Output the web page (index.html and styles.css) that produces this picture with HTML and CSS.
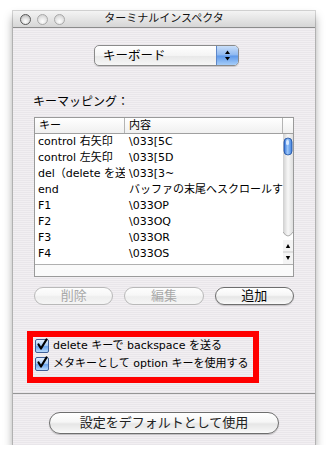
FILE: index.html
```html
<!DOCTYPE html>
<html lang="ja">
<head>
<meta charset="utf-8">
<title>ターミナルインスペクタ</title>
<link rel="stylesheet" href="styles.css">
</head>
<body>
<div class="window">
  <div class="titlebar">
    <div class="lights">
      <span class="light dark"></span>
      <span class="light"></span>
      <span class="light"></span>
    </div>
    <div class="title">ターミナルインスペクタ</div>
  </div>
  <div class="content">
    <div class="popup-row">
      <div class="popup">
        <span class="popup-label">キーボード</span>
        <span class="popup-arrows">
          <svg width="21" height="21" viewBox="0 0 21 21"><path d="M10.5 5.5 L13 9 L8 9 Z" fill="#000"/><path d="M8 12 L13 12 L10.5 15.5 Z" fill="#000"/></svg>
        </span>
      </div>
    </div>
    <div class="section-label">キーマッピング：</div>
    <div class="table">
      <div class="thead">
        <div class="th c1">キー</div>
        <div class="th c2">内容</div>
        <div class="th c3"></div>
      </div>
      <div class="tbody">
        <div class="rows">
          <div class="row"><div class="td c1">control 右矢印</div><div class="td c2">\033[5C</div></div>
          <div class="row"><div class="td c1">control 左矢印</div><div class="td c2">\033[5D</div></div>
          <div class="row"><div class="td c1">del（delete を送る）</div><div class="td c2">\033[3~</div></div>
          <div class="row"><div class="td c1">end</div><div class="td c2">バッファの末尾へスクロールする</div></div>
          <div class="row"><div class="td c1">F1</div><div class="td c2">\033OP</div></div>
          <div class="row"><div class="td c1">F2</div><div class="td c2">\033OQ</div></div>
          <div class="row"><div class="td c1">F3</div><div class="td c2">\033OR</div></div>
          <div class="row"><div class="td c1">F4</div><div class="td c2">\033OS</div></div>
        </div>
        <div class="vscroll">
          <svg width="10" height="130" viewBox="0 0 10 130">
            <defs>
              <linearGradient id="trk" x1="0" y1="0" x2="1" y2="0">
                <stop offset="0" stop-color="#cfcfcf"/>
                <stop offset="0.5" stop-color="#f7f7f7"/>
                <stop offset="1" stop-color="#dedede"/>
              </linearGradient>
              <linearGradient id="thm" x1="0" y1="0" x2="1" y2="0">
                <stop offset="0" stop-color="#2f6fd8"/>
                <stop offset="0.45" stop-color="#9cc6f8"/>
                <stop offset="1" stop-color="#3c7fe0"/>
              </linearGradient>
            </defs>
            <rect x="0" y="0" width="10" height="130" fill="url(#trk)"/>
            <path d="M0 98 Q5 106 10 98 L10 106 L0 106 Z" fill="#fff"/>
            <path d="M0 98 Q5 106 10 98" fill="none" stroke="#9a9a9a" stroke-width="0.8"/>
            <rect x="0" y="106" width="10" height="24" fill="#f4f4f4"/>
            <line x1="0" y1="118" x2="10" y2="118" stroke="#c8c8c8" stroke-width="1"/>
            <path d="M5 110 L7.2 114 L2.8 114 Z" fill="#000"/>
            <path d="M2.8 122 L7.2 122 L5 126 Z" fill="#000"/>
            <rect x="1" y="4" width="8" height="17" rx="4" fill="url(#thm)" stroke="#1f4f9e" stroke-width="0.8"/>
            <rect x="3" y="6" width="3" height="5" rx="1.5" fill="#e9f3ff" opacity="0.8"/>
          </svg>
        </div>
      </div>
      <div class="hstrip"></div>
    </div>
    <div class="buttons">
      <button class="btn small disabled">削除</button>
      <button class="btn small disabled">編集</button>
      <button class="btn small">追加</button>
    </div>
    <div class="options">
      <label class="check">
        <span class="box"><svg width="14" height="14" viewBox="0 0 14 14"><path d="M3.5 6.5 L6 10.5 L11.5 1.5" fill="none" stroke="#000" stroke-width="2.2" stroke-linecap="round" stroke-linejoin="round"/></svg></span>
        <span class="check-text">delete キーで backspace を送る</span>
      </label>
      <label class="check">
        <span class="box"><svg width="14" height="14" viewBox="0 0 14 14"><path d="M3.5 6.5 L6 10.5 L11.5 1.5" fill="none" stroke="#000" stroke-width="2.2" stroke-linecap="round" stroke-linejoin="round"/></svg></span>
        <span class="check-text">メタキーとして option キーを使用する</span>
      </label>
    </div>
  </div>
  <div class="separator"></div>
  <div class="footer">
    <button class="btn large">設定をデフォルトとして使用</button>
  </div>
</div>
</body>
</html>
```

FILE: styles.css
```css
html, body {
  margin: 0;
  padding: 0;
  background: #fff;
}
body {
  font-family: "DejaVu Sans", "Noto Sans CJK JP", sans-serif;
  color: #000;
}
.window {
  margin: 11px 0 0 13px;
  width: 302px;
  height: 434px;
  background: repeating-linear-gradient(to bottom, #f2eff2 0 1px, #e9e6ea 1px 2px);
  box-shadow: 0 0 0 1px rgba(0, 0, 0, 0.16), 0 6px 9px rgba(0, 0, 0, 0.38);
  display: flex;
  flex-direction: column;
}
.titlebar {
  height: 16px;
  border-bottom: 1px solid #8c8c8c;
  background: linear-gradient(to bottom, #f4f4f4, #e2e2e2 60%, #d6d6d6);
  display: flex;
  align-items: center;
  position: relative;
}
.lights {
  display: flex;
  gap: 6px;
  padding-left: 7px;
}
.light {
  width: 10px;
  height: 10px;
  border-radius: 50%;
  border: 1px solid #a9a9a9;
  box-sizing: border-box;
  background: radial-gradient(circle at 50% 70%, #ffffff 0, #e8e8e8 45%, #c8c8c8 100%);
  width: 11px;
  height: 11px;
}
.light.dark {
  border-color: #5a5a5a;
  background: radial-gradient(circle at 50% 70%, #ffffff 0, #e0e0e0 45%, #a9a9a9 100%);
}
.title {
  position: absolute;
  left: 0;
  right: 0;
  top: 0;
  line-height: 16px;
  text-align: center;
  font-size: 11px;
  color: #111;
  pointer-events: none;
}
.content {
  padding: 0 0 0 21px;
  display: flex;
  flex-direction: column;
}
.popup-row {
  padding-left: 60px;
  margin-top: 17px;
}
.popup {
  width: 145px;
  height: 21px;
  box-sizing: border-box;
  border: 1px solid #8a8a8a;
  border-radius: 5px;
  background: linear-gradient(to bottom, #ffffff, #f4f4f4 50%, #e8e8e8 52%, #f6f6f6);
  display: flex;
  align-items: center;
  overflow: hidden;
  box-shadow: 0 1px 1px rgba(0, 0, 0, 0.15);
}
.popup-label {
  flex: 1;
  font-size: 12.5px;
  padding-left: 8px;
  line-height: 19px;
}
.popup-arrows {
  width: 21px;
  height: 19px;
  display: flex;
  align-items: center;
  justify-content: center;
  border-left: 1px solid #5d87c9;
  background: linear-gradient(to bottom, #c9def9, #8db8f1 48%, #5d98ea 52%, #a6cdf8);
}
.popup-arrows svg {
  display: block;
}
.section-label {
  margin-top: 29px;
  margin-left: -1px;
  font-size: 12px;
  line-height: 15px;
}
.table {
  margin-top: 7px;
  width: 260px;
  box-sizing: border-box;
  border: 1px solid #9a9a9a;
  background: #fff;
  display: flex;
  flex-direction: column;
}
.thead {
  display: flex;
  height: 15px;
  border-bottom: 1px solid #a0a0a0;
  background: linear-gradient(to bottom, #ffffff, #f0f0f0);
}
.th {
  font-size: 11px;
  line-height: 15px;
  box-sizing: border-box;
  padding-left: 4px;
  white-space: nowrap;
  overflow: hidden;
}
.th.c1 {
  width: 90px;
  border-right: 1px solid #b4b4b4;
}
.th.c2 {
  width: 158px;
  border-right: 1px solid #b4b4b4;
}
.th.c3 {
  width: 10px;
  padding: 0;
}
.tbody {
  display: flex;
  height: 130px;
}
.rows {
  width: 248px;
  display: flex;
  flex-direction: column;
}
.row {
  display: flex;
  height: 16px;
}
.td {
  font-size: 11px;
  line-height: 16px;
  box-sizing: border-box;
  padding-left: 3px;
  white-space: nowrap;
  overflow: hidden;
}
.td.c1 {
  width: 90px;
}
.td.c2 {
  width: 158px;
  padding-left: 4px;
}
.vscroll {
  width: 10px;
  height: 130px;
}
.vscroll svg {
  display: block;
}
.hstrip {
  height: 11px;
  border-top: 1px solid #b0b0b0;
  background: #fafafa;
}
.buttons {
  margin-top: 10px;
  width: 260px;
  display: grid;
  grid-template-columns: 1fr 1fr 1fr;
  gap: 11px;
}
.btn {
  font-family: "DejaVu Sans", "Noto Sans CJK JP", sans-serif;
  color: #000;
  box-sizing: border-box;
  border: 1px solid #6e6e6e;
  background: linear-gradient(to bottom, #ffffff 0%, #f6f6f6 45%, #e6e6e6 55%, #f2f2f2 85%, #fbfbfb 100%);
  box-shadow: 0 1px 1px rgba(0, 0, 0, 0.18);
  padding: 0;
  margin: 0;
}
.btn.small {
  height: 18px;
  border-radius: 9px;
  font-size: 13px;
  line-height: 16px;
}
.btn.disabled {
  color: #a8a8a8;
  border-color: #b9b9b9;
  background: linear-gradient(to bottom, #fdfdfd 0%, #f7f7f7 45%, #eeeeee 55%, #f5f5f5 100%);
  box-shadow: none;
}
.options {
  margin-top: 26px;
  margin-left: -7px;
  width: 232px;
  height: 52px;
  box-sizing: border-box;
  border: 6px solid #ff0000;
  padding: 0 0 3px 2px;
  display: flex;
  flex-direction: column;
}
.check {
  display: flex;
  align-items: center;
  height: 18px;
  gap: 4px;
}
.box {
  width: 14px;
  height: 14px;
  box-sizing: border-box;
  border: 1px solid #3f5f96;
  border-radius: 2px;
  background: linear-gradient(to bottom, #e4f0fd, #a9cdf7 45%, #6aa4ee 55%, #b9dafb);
  display: flex;
  overflow: visible;
}
.box svg {
  display: block;
  margin: -2px 0 0 -1px;
  overflow: visible;
}
.check-text {
  font-size: 11px;
  line-height: 16px;
  white-space: nowrap;
}
.separator {
  margin-top: 10px;
  height: 1px;
  background: #959595;
}
.footer {
  padding: 18px 0 0 36px;
}
.btn.large {
  width: 230px;
  height: 22px;
  border-radius: 11px;
  font-size: 13px;
  line-height: 20px;
  color: #222;
}
```
